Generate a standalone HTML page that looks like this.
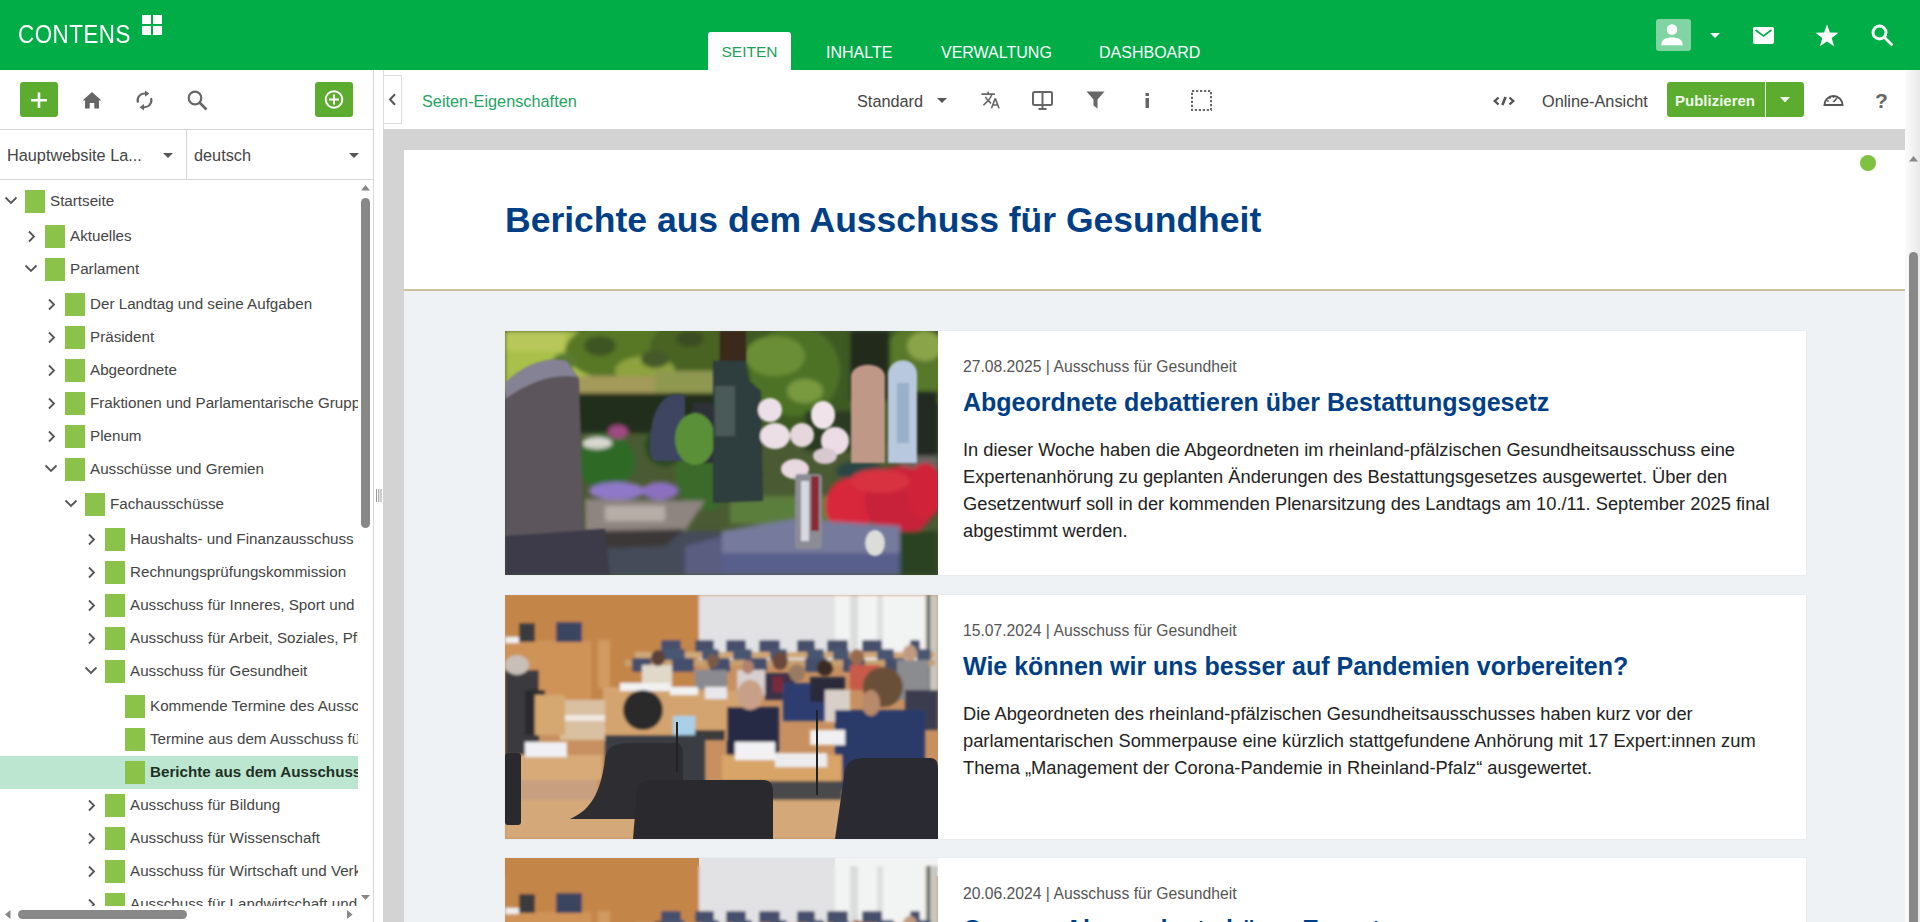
<!DOCTYPE html>
<html><head><meta charset="utf-8">
<style>
*{box-sizing:border-box;margin:0;padding:0}
html,body{width:1920px;height:922px;overflow:hidden;background:#fff;font-family:"Liberation Sans",sans-serif;color:#444}
.abs{position:absolute}
#hdr{position:absolute;left:0;top:0;width:1920px;height:70px;background:#00ad47}
.logo{position:absolute;left:18px;top:19px;font-size:26px;letter-spacing:0.6px;transform:scaleX(0.86);transform-origin:0 0;color:#fff;line-height:30px}
.sq{position:absolute;width:8.5px;height:8.5px;background:#fff}
.tab{position:absolute;top:32px;height:38px;font-size:16px;line-height:42px;color:#fff;text-transform:uppercase}
.tab.act{background:#fff;color:#1f9f5a;border-radius:3px 3px 0 0}
#side{position:absolute;left:0;top:70px;width:374px;height:852px;background:#fff;border-right:1px solid #d8d8d8}
.gbtn{position:absolute;background:#5cac30;border-radius:3px}
.row{position:absolute;left:0;height:33px;width:358px;white-space:nowrap;overflow:hidden;font-size:15.2px;color:#444}
.row .s{position:absolute;top:5px;width:20px;height:23px;background:#8bc34a}
.row .t{position:absolute;top:-1px;line-height:33px}
.row .c{position:absolute;top:0}
.row.sel{background:#bde6d0}
.row.sel .t{font-weight:700;color:#1d3024}
#main{position:absolute;left:383px;top:70px;width:1537px;height:852px;background:#d3d3d3}
#tb{position:absolute;left:383px;top:70px;width:1537px;height:59px;background:#fff}
#frame{position:absolute;left:404px;top:150px;width:1501px;height:772px;background:#eef2f5;overflow:hidden}
.card{position:absolute;left:101px;width:1301px;height:244px;background:#fff;box-shadow:0 0 2px rgba(0,0,0,0.08)}
.card .img{position:absolute;left:0;top:0;width:433px;height:244px;overflow:hidden}
.date{position:absolute;left:458px;font-size:15.7px;color:#555}
.ttl{position:absolute;left:458px;font-size:25px;font-weight:700;color:#003f86;white-space:nowrap}
.txt{position:absolute;left:458px;width:820px;font-size:18.3px;line-height:27px;color:#222}
</style></head><body>
<div id="hdr">
  <div class="logo">CONTENS</div>
  <div class="sq" style="left:142px;top:15px"></div><div class="sq" style="left:153px;top:15px"></div>
  <div class="sq" style="left:142px;top:26px"></div><div class="sq" style="left:153px;top:26px"></div>
  <div class="tab act" style="left:708px;width:83px;text-align:center;font-size:15.5px;line-height:40px">Seiten</div>
  <div class="tab" style="left:826px">Inhalte</div>
  <div class="tab" style="left:941px">Verwaltung</div>
  <div class="tab" style="left:1099px">Dashboard</div>
  <div class="abs" style="left:1656px;top:19px;width:35px;height:32px;border-radius:3px;background:#80d5a3"></div>
  <svg class="abs" style="left:1656px;top:19px" width="35" height="32" viewBox="0 0 35 32"><circle cx="16" cy="10.5" r="5.3" fill="#fff"/><path d="M5.3 26.2 C5.3 20.5 9.5 18.5 16 18.5 C22.5 18.5 26.7 20.5 26.7 26.2Z" fill="#fff"/></svg>
  <svg class="abs" style="left:1710px;top:33px" width="10" height="5"><path d="M0 0H10L5 5Z" fill="#fff"/></svg>
  <svg class="abs" style="left:1753px;top:27px" width="21" height="17" viewBox="0 0 21 17"><rect x="0" y="0" width="21" height="17" rx="2" fill="#fff"/><path d="M2.5 3 L10.5 9 L18.5 3" fill="none" stroke="#00ad47" stroke-width="1.6"/></svg>
  <svg class="abs" style="left:1815px;top:24px" width="24" height="23" viewBox="0 0 24 23"><path d="M12 0.5 L14.9 8.6 L23.5 8.8 L16.7 14 L19.1 22.3 L12 17.4 L4.9 22.3 L7.3 14 L0.5 8.8 L9.1 8.6Z" fill="#fff"/></svg>
  <svg class="abs" style="left:1871px;top:24px" width="22" height="22" viewBox="0 0 22 22"><circle cx="8.5" cy="8.5" r="6.5" fill="none" stroke="#fff" stroke-width="2.9"/><path d="M13.5 13.5 L20.5 20.5" stroke="#fff" stroke-width="2.8" stroke-linecap="round"/></svg>
</div>
<div id="side">
  <div class="gbtn" style="left:20px;top:12px;width:38px;height:35px"><svg class="abs" style="left:0;top:0" width="38" height="35"><path d="M19 10.5V26M11 18.2H27" stroke="#fff" stroke-width="2.6"/></svg></div>
  <svg class="abs" style="left:82px;top:21px" width="20" height="18" viewBox="0 0 20 18"><path d="M10 1 L19.5 9.5 L17 9.5 L17 17.5 L12.3 17.5 L12.3 12 L7.7 12 L7.7 17.5 L3 17.5 L3 9.5 L0.5 9.5Z" fill="#666"/></svg>
  <svg class="abs" style="left:135px;top:90px;top:20px" width="19" height="21" viewBox="0 0 19 21"><path d="M3 12.6 A6.8 6.8 0 0 1 10.2 3.6" fill="none" stroke="#666" stroke-width="2.1"/><path d="M10 0.4 L14.4 3.6 L10 6.8Z" fill="#666"/><path d="M16 8.2 A6.8 6.8 0 0 1 8.8 17.2" fill="none" stroke="#666" stroke-width="2.1"/><path d="M9 14 L4.6 17.2 L9 20.4Z" fill="#666"/></svg>
  <svg class="abs" style="left:187px;top:20px" width="21" height="21" viewBox="0 0 21 21"><circle cx="8" cy="8" r="6.3" fill="none" stroke="#666" stroke-width="2.2"/><path d="M12.5 12.5 L19.5 19.5" stroke="#666" stroke-width="2.6"/></svg>
  <div class="gbtn" style="left:315px;top:12px;width:38px;height:35px"><svg class="abs" style="left:0;top:0" width="38" height="35"><circle cx="19" cy="17.5" r="8.3" fill="none" stroke="#fff" stroke-width="2"/><path d="M19 12.5V22.5M14 17.5H24" stroke="#fff" stroke-width="2"/></svg></div>
  <div class="abs" style="left:0;top:59px;width:373px;height:1px;background:#d6d6d6"></div>
  <div class="abs" style="left:186px;top:60px;width:1px;height:49px;background:#d6d6d6"></div>
  <div class="abs" style="left:0;top:109px;width:373px;height:1px;background:#d6d6d6"></div>
  <div class="abs" style="left:7px;top:74px;font-size:16.3px;line-height:22px;color:#444">Hauptwebsite La...</div>
  <svg class="abs" style="left:163px;top:83px" width="10" height="5"><path d="M0 0H10L5 5Z" fill="#555"/></svg>
  <div class="abs" style="left:194px;top:74px;font-size:16.3px;line-height:22px;color:#444">deutsch</div>
  <svg class="abs" style="left:349px;top:83px" width="10" height="5"><path d="M0 0H10L5 5Z" fill="#555"/></svg>
  <div id="tree" class="abs" style="left:0;top:110px;width:358px;height:726px;overflow:hidden">
<div class="row" style="top:5px"><svg class="c" style="left:4px;top:-1px" width="14" height="33" viewBox="0 0 14 33"><path d="M1.5 13.5 L7 19 L12.5 13.5" fill="none" stroke="#555" stroke-width="1.8"/></svg><div class="s" style="left:25px"></div><div class="t" style="left:50px">Startseite</div></div>
<div class="row" style="top:40px"><svg class="c" style="left:27px" width="10" height="33" viewBox="0 0 10 33"><path d="M2 11.5 L7 16.5 L2 21.5" fill="none" stroke="#555" stroke-width="1.8"/></svg><div class="s" style="left:45px"></div><div class="t" style="left:70px">Aktuelles</div></div>
<div class="row" style="top:73px"><svg class="c" style="left:24px;top:-1px" width="14" height="33" viewBox="0 0 14 33"><path d="M1.5 13.5 L7 19 L12.5 13.5" fill="none" stroke="#555" stroke-width="1.8"/></svg><div class="s" style="left:45px"></div><div class="t" style="left:70px">Parlament</div></div>
<div class="row" style="top:108px"><svg class="c" style="left:47px" width="10" height="33" viewBox="0 0 10 33"><path d="M2 11.5 L7 16.5 L2 21.5" fill="none" stroke="#555" stroke-width="1.8"/></svg><div class="s" style="left:65px"></div><div class="t" style="left:90px">Der Landtag und seine Aufgaben</div></div>
<div class="row" style="top:141px"><svg class="c" style="left:47px" width="10" height="33" viewBox="0 0 10 33"><path d="M2 11.5 L7 16.5 L2 21.5" fill="none" stroke="#555" stroke-width="1.8"/></svg><div class="s" style="left:65px"></div><div class="t" style="left:90px">Präsident</div></div>
<div class="row" style="top:174px"><svg class="c" style="left:47px" width="10" height="33" viewBox="0 0 10 33"><path d="M2 11.5 L7 16.5 L2 21.5" fill="none" stroke="#555" stroke-width="1.8"/></svg><div class="s" style="left:65px"></div><div class="t" style="left:90px">Abgeordnete</div></div>
<div class="row" style="top:207px"><svg class="c" style="left:47px" width="10" height="33" viewBox="0 0 10 33"><path d="M2 11.5 L7 16.5 L2 21.5" fill="none" stroke="#555" stroke-width="1.8"/></svg><div class="s" style="left:65px"></div><div class="t" style="left:90px">Fraktionen und Parlamentarische Gruppen</div></div>
<div class="row" style="top:240px"><svg class="c" style="left:47px" width="10" height="33" viewBox="0 0 10 33"><path d="M2 11.5 L7 16.5 L2 21.5" fill="none" stroke="#555" stroke-width="1.8"/></svg><div class="s" style="left:65px"></div><div class="t" style="left:90px">Plenum</div></div>
<div class="row" style="top:273px"><svg class="c" style="left:44px;top:-1px" width="14" height="33" viewBox="0 0 14 33"><path d="M1.5 13.5 L7 19 L12.5 13.5" fill="none" stroke="#555" stroke-width="1.8"/></svg><div class="s" style="left:65px"></div><div class="t" style="left:90px">Ausschüsse und Gremien</div></div>
<div class="row" style="top:308px"><svg class="c" style="left:64px;top:-1px" width="14" height="33" viewBox="0 0 14 33"><path d="M1.5 13.5 L7 19 L12.5 13.5" fill="none" stroke="#555" stroke-width="1.8"/></svg><div class="s" style="left:85px"></div><div class="t" style="left:110px">Fachausschüsse</div></div>
<div class="row" style="top:343px"><svg class="c" style="left:87px" width="10" height="33" viewBox="0 0 10 33"><path d="M2 11.5 L7 16.5 L2 21.5" fill="none" stroke="#555" stroke-width="1.8"/></svg><div class="s" style="left:105px"></div><div class="t" style="left:130px">Haushalts- und Finanzausschuss</div></div>
<div class="row" style="top:376px"><svg class="c" style="left:87px" width="10" height="33" viewBox="0 0 10 33"><path d="M2 11.5 L7 16.5 L2 21.5" fill="none" stroke="#555" stroke-width="1.8"/></svg><div class="s" style="left:105px"></div><div class="t" style="left:130px">Rechnungsprüfungskommission</div></div>
<div class="row" style="top:409px"><svg class="c" style="left:87px" width="10" height="33" viewBox="0 0 10 33"><path d="M2 11.5 L7 16.5 L2 21.5" fill="none" stroke="#555" stroke-width="1.8"/></svg><div class="s" style="left:105px"></div><div class="t" style="left:130px">Ausschuss für Inneres, Sport und Infrastruktur</div></div>
<div class="row" style="top:442px"><svg class="c" style="left:87px" width="10" height="33" viewBox="0 0 10 33"><path d="M2 11.5 L7 16.5 L2 21.5" fill="none" stroke="#555" stroke-width="1.8"/></svg><div class="s" style="left:105px"></div><div class="t" style="left:130px">Ausschuss für Arbeit, Soziales, Pflege und Transformation</div></div>
<div class="row" style="top:475px"><svg class="c" style="left:84px;top:-1px" width="14" height="33" viewBox="0 0 14 33"><path d="M1.5 13.5 L7 19 L12.5 13.5" fill="none" stroke="#555" stroke-width="1.8"/></svg><div class="s" style="left:105px"></div><div class="t" style="left:130px">Ausschuss für Gesundheit</div></div>
<div class="row" style="top:510px"><div class="s" style="left:125px"></div><div class="t" style="left:150px">Kommende Termine des Ausschusses für Gesundheit</div></div>
<div class="row" style="top:543px"><div class="s" style="left:125px"></div><div class="t" style="left:150px">Termine aus dem Ausschuss für Gesundheit</div></div>
<div class="row sel" style="top:576px"><div class="s" style="left:125px"></div><div class="t" style="left:150px">Berichte aus dem Ausschuss für Gesundheit</div></div>
<div class="row" style="top:609px"><svg class="c" style="left:87px" width="10" height="33" viewBox="0 0 10 33"><path d="M2 11.5 L7 16.5 L2 21.5" fill="none" stroke="#555" stroke-width="1.8"/></svg><div class="s" style="left:105px"></div><div class="t" style="left:130px">Ausschuss für Bildung</div></div>
<div class="row" style="top:642px"><svg class="c" style="left:87px" width="10" height="33" viewBox="0 0 10 33"><path d="M2 11.5 L7 16.5 L2 21.5" fill="none" stroke="#555" stroke-width="1.8"/></svg><div class="s" style="left:105px"></div><div class="t" style="left:130px">Ausschuss für Wissenschaft</div></div>
<div class="row" style="top:675px"><svg class="c" style="left:87px" width="10" height="33" viewBox="0 0 10 33"><path d="M2 11.5 L7 16.5 L2 21.5" fill="none" stroke="#555" stroke-width="1.8"/></svg><div class="s" style="left:105px"></div><div class="t" style="left:130px">Ausschuss für Wirtschaft und Verkehr</div></div>
<div class="row" style="top:708px"><svg class="c" style="left:87px" width="10" height="33" viewBox="0 0 10 33"><path d="M2 11.5 L7 16.5 L2 21.5" fill="none" stroke="#555" stroke-width="1.8"/></svg><div class="s" style="left:105px"></div><div class="t" style="left:130px">Ausschuss für Landwirtschaft und Weinbau</div></div>
  </div>
  <svg class="abs" style="left:361px;top:115px" width="9" height="6"><path d="M0 5.5H9L4.5 0Z" fill="#888"/></svg>
  <div class="abs" style="left:361px;top:128px;width:9px;height:330px;border-radius:5px;background:#888"></div>
  <svg class="abs" style="left:361px;top:825px" width="9" height="6"><path d="M0 0H9L4.5 5Z" fill="#888"/></svg>
  <svg class="abs" style="left:5px;top:840px" width="6" height="9"><path d="M5.5 0V9L0 4.5Z" fill="#888"/></svg>
  <div class="abs" style="left:18px;top:840px;width:169px;height:9px;border-radius:5px;background:#888"></div>
  <svg class="abs" style="left:347px;top:840px" width="6" height="9"><path d="M0 0V9L5.5 4.5Z" fill="#888"/></svg>
</div>
<svg class="abs" style="left:376px;top:489px" width="6" height="13"><path d="M0.5 0V13M2.75 0V13M5 0V13" stroke="#999" stroke-width="1"/></svg>
<div id="main"></div>
<div id="tb">
  <div class="abs" style="left:0;top:0;width:1px;height:59px;background:#dcdcdc"></div>
  <div class="abs" style="left:0;top:5px;width:19px;height:49px;border:1px solid #dcdcdc;background:#fff"></div>
  <svg class="abs" style="left:5px;top:23px" width="9" height="13" viewBox="0 0 9 13"><path d="M7 1.2 L2 6.5 L7 11.8" fill="none" stroke="#555" stroke-width="2"/></svg>
  <div class="abs" style="left:39px;top:20px;font-size:16.3px;line-height:22px;color:#1fa463">Seiten-Eigenschaften</div>
  <div class="abs" style="left:474px;top:20px;font-size:16.3px;line-height:22px;color:#444">Standard</div>
  <svg class="abs" style="left:554px;top:28px" width="10" height="5"><path d="M0 0H10L5 5Z" fill="#555"/></svg>
  <svg class="abs" style="left:596.5px;top:20px" width="21" height="20" viewBox="0 0 24 24"><g transform="translate(0.2,0) scale(1.0)"><path d="M12.87 15.07l-2.54-2.51.03-.03c1.74-1.94 2.98-4.17 3.71-6.53H17V4h-7V2H8v2H1v1.99h11.17C11.5 7.92 10.44 9.75 9 11.35 8.07 10.32 7.3 9.19 6.69 8h-2c.73 1.63 1.73 3.17 2.98 4.56l-5.090 5.02L4 19l5-5 3.11 3.11.76-2.04zM18.5 10h-2L12 22h2l1.12-3h4.750L21 22h2l-4.5-12zm-2.62 7l1.62-4.33L19.12 17h-3.24z" fill="#666"/></g></svg>
  <svg class="abs" style="left:649px;top:21px" width="21" height="20" viewBox="0 0 21 20"><rect x="1" y="1" width="19" height="13" rx="1.5" fill="none" stroke="#666" stroke-width="2"/><path d="M10.5 1V17M6.5 18H14.5" stroke="#666" stroke-width="2"/></svg>
  <svg class="abs" style="left:703px;top:21px" width="19" height="18" viewBox="0 0 19 18"><path d="M0.5 0.5H18.5L11.5 8.5V17.5L7.5 14.5V8.5Z" fill="#666"/></svg>
  <svg class="abs" style="left:762px;top:23px" width="5" height="15" viewBox="0 0 5 15"><rect x="0.5" y="0" width="3.5" height="3" fill="#666"/><rect x="0.5" y="5" width="3.5" height="10" fill="#666"/></svg>
  <svg class="abs" style="left:808px;top:20px" width="21" height="21" viewBox="0 0 21 21"><rect x="1" y="1" width="19" height="19" fill="none" stroke="#666" stroke-width="2" stroke-dasharray="2.2 1.8"/></svg>
  <svg class="abs" style="left:1110px;top:26px" width="22" height="10" viewBox="0 0 22 10"><path d="M5.5 1.5 L1.8 5 L5.5 8.5M16.5 1.5 L20.2 5 L16.5 8.5" fill="none" stroke="#555" stroke-width="2.4"/><path d="M12.6 1 L9.4 9" stroke="#555" stroke-width="2.6"/></svg>
  <div class="abs" style="left:1159px;top:20px;font-size:16.3px;line-height:22px;color:#444">Online-Ansicht</div>
  <div class="abs" style="left:1284px;top:12px;width:137px;height:35px;background:#5cac30;border-radius:3px"></div>
  <div class="abs" style="left:1382px;top:12px;width:1px;height:35px;background:#e6f2df"></div>
  <div class="abs" style="left:1292px;top:20px;font-size:15px;line-height:22px;font-weight:700;color:#eef7e8">Publizieren</div>
  <svg class="abs" style="left:1397px;top:27px" width="10" height="6"><path d="M0 0H10L5 5.5Z" fill="#eef7e8"/></svg>
  <svg class="abs" style="left:1440px;top:23px" width="21" height="13" viewBox="0 0 21 13"><path d="M1.5 12 A9 9 0 1 1 19.5 12 Z" fill="none" stroke="#555" stroke-width="2"/><path d="M10.5 9 L14 5" stroke="#555" stroke-width="1.6"/><circle cx="5" cy="8" r="0.9" fill="#555"/><circle cx="7" cy="5" r="0.9" fill="#555"/><circle cx="10.5" cy="4" r="0.9" fill="#555"/></svg>
  <div class="abs" style="left:1492px;top:18px;font-size:21px;line-height:26px;font-weight:700;color:#666">?</div>
</div>
<div id="frame">
  <div class="abs" style="left:0;top:0;width:1501px;height:139px;background:#fff"></div>
  <div class="abs" style="left:0;top:139px;width:1501px;height:2px;background:#c9c29c"></div>
  <div class="abs" style="left:101px;top:49px;font-size:35.5px;line-height:42px;font-weight:700;color:#003f86;white-space:nowrap">Berichte aus dem Ausschuss für Gesundheit</div>
  <div class="abs" style="left:1456px;top:5px;width:16px;height:16px;border-radius:50%;background:#7fc241"></div>
  <div class="card" style="top:181px"><div class="img"><svg width="433" height="244" viewBox="0 0 433 244">
<defs><filter id="b1" x="-5%" y="-5%" width="110%" height="110%"><feGaussianBlur stdDeviation="2"/></filter>
<filter id="b1s"><feGaussianBlur stdDeviation="0.8"/></filter></defs>
<rect width="433" height="244" fill="#4a5a32"/>
<g filter="url(#b1)">
<!-- meadow / trees background -->
<rect x="0" y="0" width="120" height="60" fill="#a9c04c"/>
<rect x="0" y="0" width="60" height="20" fill="#b7c75a"/>
<ellipse cx="120" cy="20" rx="60" ry="30" fill="#587828"/>
<ellipse cx="190" cy="18" rx="45" ry="32" fill="#4a6424"/>
<ellipse cx="140" cy="40" rx="30" ry="15" fill="#8ea23e"/>
<rect x="70" y="45" width="150" height="22" fill="#a49a5a"/>
<rect x="150" y="40" width="70" height="25" fill="#8f9850"/>
<rect x="70" y="62" width="150" height="40" fill="#232e1c"/>
<rect x="215" y="0" width="218" height="110" fill="#3d5a24"/>
<ellipse cx="290" cy="40" rx="45" ry="45" fill="#4e7228"/>
<ellipse cx="270" cy="25" rx="30" ry="20" fill="#6a8e36"/>
<ellipse cx="300" cy="60" rx="18" ry="12" fill="#7a9a40"/>
<ellipse cx="410" cy="40" rx="35" ry="45" fill="#58782c"/>
<ellipse cx="420" cy="15" rx="18" ry="15" fill="#8aa448"/>
<ellipse cx="95" cy="15" rx="16" ry="10" fill="#3e5424"/>
<ellipse cx="150" cy="28" rx="14" ry="9" fill="#44582a"/>
<ellipse cx="185" cy="8" rx="14" ry="8" fill="#3a4e22"/>
<ellipse cx="60" cy="30" rx="12" ry="8" fill="#5a7a30"/>
<rect x="345" y="0" width="40" height="70" fill="#242a1c"/>
<rect x="300" y="80" width="60" height="40" fill="#2a3a20"/>
<rect x="405" y="60" width="28" height="80" fill="#222a20"/>
<!-- bushes low -->
<ellipse cx="100" cy="130" rx="30" ry="28" fill="#2f6a28"/>
<ellipse cx="200" cy="140" rx="30" ry="40" fill="#3a6a2a"/>
<ellipse cx="160" cy="115" rx="20" ry="20" fill="#2b4a22"/>
<!-- purple flowers -->
<ellipse cx="112" cy="160" rx="28" ry="9" fill="#8f78c8"/>
<ellipse cx="155" cy="160" rx="18" ry="9" fill="#8c70c0"/>
<ellipse cx="113" cy="101" rx="10" ry="7" fill="#a04a80"/>
<ellipse cx="92" cy="112" rx="15" ry="6" fill="#d8d8d0"/>
<!-- gravel -->
<rect x="100" y="200" width="140" height="44" fill="#454c58"/>
<!-- stone slab left mid -->
<path d="M80 168 L200 170 L180 200 L80 205Z" fill="#8e8480"/>
<rect x="100" y="175" width="60" height="15" fill="#b8aea8"/>
<path d="M80 200 L180 198 L160 215 L80 218Z" fill="#3e3838"/>
<!-- green grass right -->
<rect x="225" y="165" width="100" height="28" fill="#5c7e3c"/>
<!-- background stones right -->
<ellipse cx="355" cy="140" rx="24" ry="10" fill="#2a4444"/>
<rect x="395" y="125" width="38" height="25" fill="#6b6560"/>
<!-- red flowers -->
<ellipse cx="345" cy="175" rx="25" ry="28" fill="#d8283a"/>
<ellipse cx="395" cy="170" rx="35" ry="35" fill="#c8223a"/>
<ellipse cx="420" cy="160" rx="18" ry="28" fill="#d02038"/>
<ellipse cx="375" cy="150" rx="30" ry="12" fill="#d83040"/>
<rect x="395" y="200" width="38" height="44" fill="#2c4222"/>
<!-- blue granite slab -->
<path d="M217 200 L290 188 L395 195 L395 244 L217 244Z" fill="#767a9c"/>
<path d="M217 222 L395 222 L395 244 L217 244Z" fill="#595e8c"/>
<path d="M180 215 L217 205 L217 244 L180 244Z" fill="#5a5c80"/>
</g>
<g filter="url(#b1s)">
<!-- big tombstone left -->
<path d="M0 52 C20 32 45 25 62 30 L74 48 L80 230 L0 232Z" fill="#5c545c"/>
<path d="M0 52 C20 32 45 25 62 30 L72 46 C50 42 25 50 0 68Z" fill="#858296"/>
<path d="M0 205 L100 198 L105 244 L0 244Z" fill="#3e3a48"/>
<!-- small dark tombstone -->
<path d="M145 122 C143 70 165 58 180 65 L180 130 L148 130Z" fill="#3e4560"/>
<rect x="188" y="72" width="22" height="60" fill="#2e3338"/>
<!-- dark-green column -->
<ellipse cx="190" cy="108" rx="20" ry="26" fill="#5a9038"/><path d="M208 30 L240 28 L244 50 L256 60 L258 170 L208 172Z" fill="#2e3d3c"/>
<rect x="215" y="0" width="26" height="30" fill="#3a2a1c"/>
<rect x="210" y="55" width="20" height="50" fill="#4a5a58"/>
<!-- pink sandstone -->
<path d="M346 45 C348 30 378 30 380 45 L380 132 L346 132Z" fill="#c09888"/>
<!-- light blue arch -->
<path d="M383 42 C386 25 410 25 412 42 L412 132 L383 132Z" fill="#b8c8de"/>
<rect x="392" y="52" width="12" height="60" fill="#98b0c8"/>
<!-- magnolia -->
<ellipse cx="265" cy="79" rx="12" ry="12" fill="#ece0e8"/>
<ellipse cx="318" cy="84" rx="12" ry="14" fill="#f0e4ea"/>
<ellipse cx="270" cy="105" rx="15" ry="13" fill="#ecdfe6"/>
<ellipse cx="297" cy="104" rx="12" ry="12" fill="#e6d6de"/>
<ellipse cx="330" cy="110" rx="14" ry="14" fill="#ecdce4"/>
<ellipse cx="290" cy="138" rx="14" ry="10" fill="#e8d8e0"/>
<ellipse cx="320" cy="125" rx="12" ry="8" fill="#d8c8d0"/>
<!-- vase -->
<rect x="290" y="143" width="27" height="75" rx="4" fill="#8c8c96"/>
<rect x="296" y="150" width="8" height="60" fill="#d8d8e0"/>
<rect x="306" y="145" width="8" height="55" fill="#8a2a30"/>
<!-- angel -->
<ellipse cx="370" cy="212" rx="10" ry="13" fill="#dcdcd8"/>
</g>
</svg>
</div>
    <div class="date" style="top:27px">27.08.2025 | Ausschuss für Gesundheit</div>
    <div class="ttl" style="top:57px">Abgeordnete debattieren über Bestattungsgesetz</div>
    <div class="txt" style="top:105px">In dieser Woche haben die Abgeordneten im rheinland-pfälzischen Gesundheitsausschuss eine Expertenanhörung zu geplanten Änderungen des Bestattungsgesetzes ausgewertet. Über den Gesetzentwurf soll in der kommenden Plenarsitzung des Landtags am 10./11. September 2025 final abgestimmt werden.</div>
  </div>
  <div class="card" style="top:445px"><div class="img"><svg width="433" height="244" viewBox="0 0 433 244">
<defs><filter id="b2" x="-5%" y="-5%" width="110%" height="110%"><feGaussianBlur stdDeviation="1.6"/></filter>
<filter id="b2s"><feGaussianBlur stdDeviation="0.7"/></filter></defs>
<rect width="433" height="244" fill="#c89060"/>
<g filter="url(#b2)">
<rect x="0" y="0" width="194" height="120" fill="#c48548"/>
<rect x="194" y="0" width="140" height="70" fill="#e2e2e4"/>
<rect x="330" y="0" width="92" height="70" fill="#f2f3f3"/>
<rect x="345" y="0" width="8" height="60" fill="#dcdcdc"/>
<rect x="372" y="0" width="6" height="60" fill="#e0e0e0"/>
<rect x="420" y="0" width="13" height="110" fill="#c8c8c0"/><rect x="422" y="0" width="3" height="110" fill="#505048"/>
<!-- navy chair rows -->
<rect x="156" y="45" width="20" height="13" rx="2" fill="#46506c"/>
<rect x="190" y="45" width="19" height="13" rx="2" fill="#46506c"/>
<rect x="221" y="45" width="20" height="13" rx="2" fill="#46506c"/>
<rect x="254" y="45" width="21" height="13" rx="2" fill="#46506c"/>
<rect x="292" y="45" width="18" height="13" rx="2" fill="#46506c"/>
<rect x="322" y="45" width="21" height="13" rx="2" fill="#46506c"/>
<rect x="357" y="45" width="20" height="13" rx="2" fill="#46506c"/>
<rect x="405" y="45" width="10" height="13" rx="2" fill="#46506c"/>
<rect x="130" y="57" width="300" height="6" fill="#d0a878"/>
<rect x="157" y="54" width="23" height="12" rx="2" fill="#4a5672"/>
<rect x="197" y="54" width="17" height="12" rx="2" fill="#4a5672"/>
<rect x="228" y="54" width="19" height="12" rx="2" fill="#4a5672"/>
<rect x="265" y="54" width="17" height="12" rx="2" fill="#4a5672"/>
<rect x="302" y="54" width="17" height="12" rx="2" fill="#4a5672"/>
<rect x="328" y="54" width="16" height="12" rx="2" fill="#4a5672"/>
<rect x="372" y="54" width="17" height="12" rx="2" fill="#4a5672"/>
<rect x="412" y="54" width="14" height="12" rx="2" fill="#4a5672"/>
<rect x="120" y="65" width="310" height="6" fill="#c8a070"/>
<rect x="127" y="63" width="19" height="14" rx="2" fill="#44506c"/>
<rect x="167" y="63" width="22" height="14" rx="2" fill="#44506c"/>
<rect x="205" y="63" width="20" height="14" rx="2" fill="#44506c"/>
<rect x="240" y="63" width="22" height="14" rx="2" fill="#44506c"/>
<rect x="300" y="63" width="22" height="14" rx="2" fill="#44506c"/>
<rect x="338" y="63" width="22" height="14" rx="2" fill="#44506c"/>
<rect x="380" y="63" width="20" height="14" rx="2" fill="#44506c"/>
<!-- podium -->
<rect x="0" y="46" width="86" height="60" fill="#cf9358"/>
<rect x="93" y="45" width="12" height="48" fill="#d09a60"/>
<rect x="51" y="27" width="26" height="20" fill="#3a4460"/>
<rect x="14" y="28" width="16" height="19" fill="#3a3a3e"/>
<rect x="0" y="42" width="14" height="6" fill="#f0f0f0"/>
<!-- people middle -->
<rect x="137" y="70" width="30" height="22" fill="#e0d8c8"/>
<ellipse cx="153" cy="63" rx="7" ry="8" fill="#5a4038"/>
<rect x="190" y="75" width="32" height="25" fill="#8a8a90"/>
<ellipse cx="208" cy="66" rx="6" ry="7" fill="#7a5a4a"/>
<rect x="232" y="75" width="28" height="25" fill="#d8d0d0"/>
<ellipse cx="243" cy="72" rx="6" ry="7" fill="#b08070"/>
<rect x="260" y="78" width="30" height="27" fill="#3a3048"/>
<rect x="268" y="82" width="10" height="15" fill="#7a2a38"/>
<ellipse cx="275" cy="66" rx="8" ry="9" fill="#6a4a3a"/>
<rect x="278" y="88" width="44" height="38" fill="#2e3c70"/>
<ellipse cx="292" cy="78" rx="8" ry="9" fill="#9a7a60"/>
<rect x="305" y="82" width="35" height="25" fill="#2a2a3a"/>
<ellipse cx="320" cy="73" rx="8" ry="8" fill="#3a2a22"/>
<rect x="320" y="95" width="25" height="32" fill="#d8d0c8"/>
<rect x="345" y="70" width="30" height="25" fill="#c85a48"/>
<ellipse cx="352" cy="62" rx="7" ry="8" fill="#9a6a50"/>
<rect x="392" y="65" width="32" height="40" fill="#8a8c90"/>
<ellipse cx="405" cy="58" rx="7" ry="8" fill="#c09a80"/>
<rect x="400" y="95" width="33" height="40" fill="#3a3e50"/>
<!-- desk front curved -->
<path d="M98 92 L240 96 L240 145 L98 145Z" fill="#d4a470"/>
<rect x="115" y="88" width="50" height="8" fill="#f2f2f2"/>
<rect x="165" y="92" width="28" height="8" fill="#f2f2f2"/>
<rect x="200" y="92" width="22" height="12" fill="#e8e8ec"/>
<rect x="55" y="105" width="45" height="40" fill="#d8c0a0"/>
<rect x="55" y="120" width="45" height="6" fill="#f0e8e0"/>
<!-- left standing man -->
<rect x="0" y="75" width="34" height="85" fill="#3a3a3c"/>
<ellipse cx="12" cy="70" rx="12" ry="10" fill="#c8c0b8"/>
<rect x="20" y="95" width="20" height="45" fill="#2a2a2e"/>
<rect x="30" y="100" width="30" height="40" fill="#d4a870"/>
<!-- bald man -->
<rect x="222" y="112" width="52" height="50" fill="#262c44"/>
<ellipse cx="245" cy="100" rx="13" ry="15" fill="#c8a088"/>
<!-- laptop -->
<rect x="168" y="121" width="22" height="20" fill="#a8d0e8"/>
<rect x="190" y="135" width="30" height="10" fill="#3a3a3a"/>
<!-- front man back of head -->
<ellipse cx="138" cy="115" rx="20" ry="20" fill="#2a2a2c"/>
<rect x="100" y="140" width="100" height="50" fill="#3a3e44"/>
<!-- right curly man -->
<rect x="330" y="115" width="90" height="80" fill="#2a3a6a"/>
<ellipse cx="378" cy="92" rx="20" ry="20" fill="#6a5038"/>
<ellipse cx="366" cy="108" rx="9" ry="13" fill="#b88a6a"/>
<!-- desks -->
<rect x="12" y="160" width="85" height="25" fill="#d8aa78"/>
<rect x="12" y="185" width="80" height="32" fill="#c8a080"/>
<rect x="217" y="160" width="120" height="26" fill="#d8a468"/>
<rect x="215" y="186" width="122" height="24" fill="#4a4a4c"/>
<rect x="20" y="147" width="42" height="15" fill="#f0f0f4"/>
<rect x="230" y="147" width="40" height="18" fill="#f2f2f4"/>
<rect x="270" y="158" width="52" height="14" fill="#ececee"/>
<rect x="305" y="135" width="35" height="15" fill="#f0f0f2"/>
<rect x="0" y="205" width="433" height="39" fill="#d4a878"/>
</g>
<g filter="url(#b2s)">
<!-- big black chairs -->
<path d="M65 224 C85 215 95 200 100 165 C102 150 110 148 130 148 L170 148 C178 148 178 155 178 165 L178 224Z" fill="#2e2e32"/>
<path d="M128 244 L132 195 C133 187 140 185 150 185 L258 185 C266 185 268 190 268 197 L268 244Z" fill="#2a2a2e"/>
<path d="M330 244 L340 175 C342 166 350 163 360 163 L425 163 C433 163 433 170 433 175 L433 244Z" fill="#2c2c30"/>
<rect x="0" y="158" width="16" height="72" rx="3" fill="#2a2a2e"/>
<rect x="171" y="127" width="2" height="50" fill="#222"/>
<rect x="311" y="115" width="2" height="85" fill="#222"/>
</g>
</svg>
</div>
    <div class="date" style="top:27px">15.07.2024 | Ausschuss für Gesundheit</div>
    <div class="ttl" style="top:57px">Wie können wir uns besser auf Pandemien vorbereiten?</div>
    <div class="txt" style="top:105px">Die Abgeordneten des rheinland-pfälzischen Gesundheitsausschusses haben kurz vor der parlamentarischen Sommerpause eine kürzlich stattgefundene Anhörung mit 17 Expert:innen zum Thema „Management der Corona-Pandemie in Rheinland-Pfalz“ ausgewertet.</div>
  </div>
  <div class="card" style="top:708px"><div class="img"><svg width="433" height="244" viewBox="0 0 433 244">
<defs><filter id="b3" x="-5%" y="-5%" width="110%" height="110%"><feGaussianBlur stdDeviation="1.6"/></filter>
<filter id="b3s"><feGaussianBlur stdDeviation="0.7"/></filter></defs>
<rect width="433" height="244" fill="#c89060"/><g transform="translate(0,8)"><rect x="0" y="-10" width="194" height="20" fill="#c48548"/><rect x="194" y="-10" width="140" height="20" fill="#e2e2e4"/><rect x="330" y="-10" width="103" height="20" fill="#f2f3f3"/>
<g filter="url(#b3)">
<rect x="0" y="0" width="194" height="120" fill="#c48548"/>
<rect x="194" y="0" width="140" height="70" fill="#e2e2e4"/>
<rect x="330" y="0" width="92" height="70" fill="#f2f3f3"/>
<rect x="345" y="0" width="8" height="60" fill="#dcdcdc"/>
<rect x="372" y="0" width="6" height="60" fill="#e0e0e0"/>
<rect x="420" y="0" width="13" height="110" fill="#c8c8c0"/><rect x="422" y="0" width="3" height="110" fill="#505048"/>
<!-- navy chair rows -->
<rect x="156" y="45" width="20" height="13" rx="2" fill="#46506c"/>
<rect x="190" y="45" width="19" height="13" rx="2" fill="#46506c"/>
<rect x="221" y="45" width="20" height="13" rx="2" fill="#46506c"/>
<rect x="254" y="45" width="21" height="13" rx="2" fill="#46506c"/>
<rect x="292" y="45" width="18" height="13" rx="2" fill="#46506c"/>
<rect x="322" y="45" width="21" height="13" rx="2" fill="#46506c"/>
<rect x="357" y="45" width="20" height="13" rx="2" fill="#46506c"/>
<rect x="405" y="45" width="10" height="13" rx="2" fill="#46506c"/>
<rect x="130" y="57" width="300" height="6" fill="#d0a878"/>
<rect x="157" y="54" width="23" height="12" rx="2" fill="#4a5672"/>
<rect x="197" y="54" width="17" height="12" rx="2" fill="#4a5672"/>
<rect x="228" y="54" width="19" height="12" rx="2" fill="#4a5672"/>
<rect x="265" y="54" width="17" height="12" rx="2" fill="#4a5672"/>
<rect x="302" y="54" width="17" height="12" rx="2" fill="#4a5672"/>
<rect x="328" y="54" width="16" height="12" rx="2" fill="#4a5672"/>
<rect x="372" y="54" width="17" height="12" rx="2" fill="#4a5672"/>
<rect x="412" y="54" width="14" height="12" rx="2" fill="#4a5672"/>
<rect x="120" y="65" width="310" height="6" fill="#c8a070"/>
<rect x="127" y="63" width="19" height="14" rx="2" fill="#44506c"/>
<rect x="167" y="63" width="22" height="14" rx="2" fill="#44506c"/>
<rect x="205" y="63" width="20" height="14" rx="2" fill="#44506c"/>
<rect x="240" y="63" width="22" height="14" rx="2" fill="#44506c"/>
<rect x="300" y="63" width="22" height="14" rx="2" fill="#44506c"/>
<rect x="338" y="63" width="22" height="14" rx="2" fill="#44506c"/>
<rect x="380" y="63" width="20" height="14" rx="2" fill="#44506c"/>
<!-- podium -->
<rect x="0" y="46" width="86" height="60" fill="#cf9358"/>
<rect x="93" y="45" width="12" height="48" fill="#d09a60"/>
<rect x="51" y="27" width="26" height="20" fill="#3a4460"/>
<rect x="14" y="28" width="16" height="19" fill="#3a3a3e"/>
<rect x="0" y="42" width="14" height="6" fill="#f0f0f0"/>
<!-- people middle -->
<rect x="137" y="70" width="30" height="22" fill="#e0d8c8"/>
<ellipse cx="153" cy="63" rx="7" ry="8" fill="#5a4038"/>
<rect x="190" y="75" width="32" height="25" fill="#8a8a90"/>
<ellipse cx="208" cy="66" rx="6" ry="7" fill="#7a5a4a"/>
<rect x="232" y="75" width="28" height="25" fill="#d8d0d0"/>
<ellipse cx="243" cy="72" rx="6" ry="7" fill="#b08070"/>
<rect x="260" y="78" width="30" height="27" fill="#3a3048"/>
<rect x="268" y="82" width="10" height="15" fill="#7a2a38"/>
<ellipse cx="275" cy="66" rx="8" ry="9" fill="#6a4a3a"/>
<rect x="278" y="88" width="44" height="38" fill="#2e3c70"/>
<ellipse cx="292" cy="78" rx="8" ry="9" fill="#9a7a60"/>
<rect x="305" y="82" width="35" height="25" fill="#2a2a3a"/>
<ellipse cx="320" cy="73" rx="8" ry="8" fill="#3a2a22"/>
<rect x="320" y="95" width="25" height="32" fill="#d8d0c8"/>
<rect x="345" y="70" width="30" height="25" fill="#c85a48"/>
<ellipse cx="352" cy="62" rx="7" ry="8" fill="#9a6a50"/>
<rect x="392" y="65" width="32" height="40" fill="#8a8c90"/>
<ellipse cx="405" cy="58" rx="7" ry="8" fill="#c09a80"/>
<rect x="400" y="95" width="33" height="40" fill="#3a3e50"/>
<!-- desk front curved -->
<path d="M98 92 L240 96 L240 145 L98 145Z" fill="#d4a470"/>
<rect x="115" y="88" width="50" height="8" fill="#f2f2f2"/>
<rect x="165" y="92" width="28" height="8" fill="#f2f2f2"/>
<rect x="200" y="92" width="22" height="12" fill="#e8e8ec"/>
<rect x="55" y="105" width="45" height="40" fill="#d8c0a0"/>
<rect x="55" y="120" width="45" height="6" fill="#f0e8e0"/>
<!-- left standing man -->
<rect x="0" y="75" width="34" height="85" fill="#3a3a3c"/>
<ellipse cx="12" cy="70" rx="12" ry="10" fill="#c8c0b8"/>
<rect x="20" y="95" width="20" height="45" fill="#2a2a2e"/>
<rect x="30" y="100" width="30" height="40" fill="#d4a870"/>
<!-- bald man -->
<rect x="222" y="112" width="52" height="50" fill="#262c44"/>
<ellipse cx="245" cy="100" rx="13" ry="15" fill="#c8a088"/>
<!-- laptop -->
<rect x="168" y="121" width="22" height="20" fill="#a8d0e8"/>
<rect x="190" y="135" width="30" height="10" fill="#3a3a3a"/>
<!-- front man back of head -->
<ellipse cx="138" cy="115" rx="20" ry="20" fill="#2a2a2c"/>
<rect x="100" y="140" width="100" height="50" fill="#3a3e44"/>
<!-- right curly man -->
<rect x="330" y="115" width="90" height="80" fill="#2a3a6a"/>
<ellipse cx="378" cy="92" rx="20" ry="20" fill="#6a5038"/>
<ellipse cx="366" cy="108" rx="9" ry="13" fill="#b88a6a"/>
<!-- desks -->
<rect x="12" y="160" width="85" height="25" fill="#d8aa78"/>
<rect x="12" y="185" width="80" height="32" fill="#c8a080"/>
<rect x="217" y="160" width="120" height="26" fill="#d8a468"/>
<rect x="215" y="186" width="122" height="24" fill="#4a4a4c"/>
<rect x="20" y="147" width="42" height="15" fill="#f0f0f4"/>
<rect x="230" y="147" width="40" height="18" fill="#f2f2f4"/>
<rect x="270" y="158" width="52" height="14" fill="#ececee"/>
<rect x="305" y="135" width="35" height="15" fill="#f0f0f2"/>
<rect x="0" y="205" width="433" height="39" fill="#d4a878"/>
</g>
<g filter="url(#b3s)">
<!-- big black chairs -->
<path d="M65 224 C85 215 95 200 100 165 C102 150 110 148 130 148 L170 148 C178 148 178 155 178 165 L178 224Z" fill="#2e2e32"/>
<path d="M128 244 L132 195 C133 187 140 185 150 185 L258 185 C266 185 268 190 268 197 L268 244Z" fill="#2a2a2e"/>
<path d="M330 244 L340 175 C342 166 350 163 360 163 L425 163 C433 163 433 170 433 175 L433 244Z" fill="#2c2c30"/>
<rect x="0" y="158" width="16" height="72" rx="3" fill="#2a2a2e"/>
<rect x="171" y="127" width="2" height="50" fill="#222"/>
<rect x="311" y="115" width="2" height="85" fill="#222"/>
</g>
</g></svg>
</div>
    <div class="date" style="top:27px">20.06.2024 | Ausschuss für Gesundheit</div>
    <div class="ttl" style="top:57px">Corona: Abgeordnete hören Experten</div>
  </div>
</div>
<div class="abs" style="left:1905px;top:70px;width:15px;height:852px;background:linear-gradient(90deg,#fbfbfb,#e9e9e9)"></div>
<svg class="abs" style="left:1909px;top:156px" width="9" height="6"><path d="M0 5.5H9L4.5 0Z" fill="#888"/></svg>
<div class="abs" style="left:1909px;top:252px;width:9px;height:700px;border-radius:5px;background:#888"></div>
<svg class="abs" style="left:1909px;top:897px" width="9" height="6"><path d="M0 0H9L4.5 5Z" fill="#888"/></svg>
</body></html>
